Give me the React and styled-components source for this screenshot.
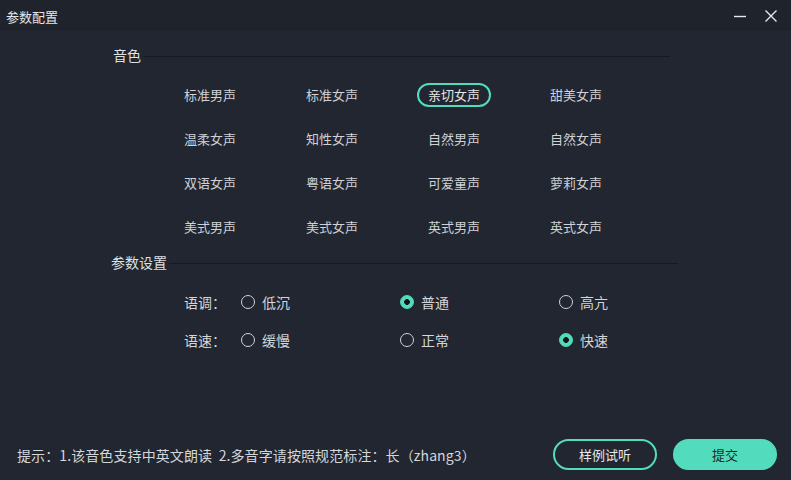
import React, { useState } from "react";
import styled, { createGlobalStyle } from "styled-components";

const GlobalStyle = createGlobalStyle`
  html, body {
    margin: 0;
    padding: 0;
    background: #212630;
  }
  * { box-sizing: border-box; }
`;

const FONT = `"Noto Sans CJK SC", "Noto Sans", sans-serif`;
const TEAL = "#52dcbd";

const voices = [
  "标准男声", "标准女声", "亲切女声", "甜美女声",
  "温柔女声", "知性女声", "自然男声", "自然女声",
  "双语女声", "粤语女声", "可爱童声", "萝莉女声",
  "美式男声", "美式女声", "英式男声", "英式女声",
];

const params = [
  { label: "语调：", options: ["低沉", "普通", "高亢"], initial: 1 },
  { label: "语速：", options: ["缓慢", "正常", "快速"], initial: 2 },
];

export default function App() {
  const [voice, setVoice] = useState(2);
  const [values, setValues] = useState(params.map((p) => p.initial));

  return (
    <>
      <GlobalStyle />
      <Window>
        <TitleBar>
          <Title>参数配置</Title>
          <WinButtons>
            <WinButton aria-label="minimize">
              <svg width="14" height="14" viewBox="0 0 14 14">
                <line x1="1" y1="7.5" x2="13" y2="7.5" stroke="#e6e8eb" strokeWidth="1.4" />
              </svg>
            </WinButton>
            <WinButton aria-label="close">
              <svg width="14" height="14" viewBox="0 0 14 14">
                <path d="M1.5 1.5 L12.5 12.5 M12.5 1.5 L1.5 12.5" stroke="#e6e8eb" strokeWidth="1.4" />
              </svg>
            </WinButton>
          </WinButtons>
        </TitleBar>

        <Body>
          <SectionHeader $indent={113} $end={121}>
            <SectionLabel>音色</SectionLabel>
            <Rule />
          </SectionHeader>

          <VoiceGrid>
            {voices.map((v, i) => (
              <VoiceItem key={v + i} $active={voice === i} onClick={() => setVoice(i)}>
                {v}
              </VoiceItem>
            ))}
          </VoiceGrid>

          <SectionHeader $indent={111} $end={113}>
            <SectionLabel>参数设置</SectionLabel>
            <Rule />
          </SectionHeader>

          <ParamList>
            {params.map((p, row) => (
              <ParamRow key={p.label}>
                <ParamLabel>{p.label}</ParamLabel>
                {p.options.map((o, col) => (
                  <RadioOption
                    key={o}
                    onClick={() =>
                      setValues((vs) => vs.map((x, k) => (k === row ? col : x)))
                    }
                  >
                    <RadioDot $checked={values[row] === col} />
                    {o}
                  </RadioOption>
                ))}
              </ParamRow>
            ))}
          </ParamList>

          <Footer>
            <Hint>提示：1.该音色支持中英文朗读&nbsp;&nbsp;2.多音字请按照规范标注：长（zhang3）</Hint>
            <Buttons>
              <PillButton>样例试听</PillButton>
              <PillButton $primary>提交</PillButton>
            </Buttons>
          </Footer>
        </Body>
      </Window>
    </>
  );
}

const Window = styled.div`
  width: 791px;
  height: 480px;
  display: flex;
  flex-direction: column;
  background: #212630;
  color: #d3d6db;
  font-family: ${FONT};
  overflow: hidden;
`;

const TitleBar = styled.div`
  height: 30px;
  flex: none;
  display: flex;
  align-items: center;
  justify-content: space-between;
  padding: 3px 13px 0 6px;
  background: #1f232b;
  border-bottom: 1px solid #1c2027;
`;

const Title = styled.div`
  font-size: 13px;
  color: #e4e6e9;
`;

const WinButtons = styled.div`
  display: flex;
  gap: 17px;
  align-items: center;
`;

const WinButton = styled.button`
  width: 14px;
  height: 14px;
  padding: 0;
  border: 0;
  background: transparent;
  display: flex;
  cursor: pointer;
`;

const Body = styled.div`
  flex: 1;
  display: flex;
  flex-direction: column;
  padding-top: 15px;
`;

const SectionHeader = styled.div`
  height: 20px;
  display: flex;
  align-items: center;
  padding-left: ${(p) => p.$indent}px;
  padding-right: ${(p) => p.$end}px;
  & + & {
    margin-top: 4px;
  }
`;

const SectionLabel = styled.div`
  font-size: 14px;
  color: #dde0e4;
  flex: none;
`;

const Rule = styled.div`
  flex: 1;
  height: 1px;
  margin-left: 2px;
  margin-top: 2px;
  background: #161a20;
`;

const VoiceGrid = styled.div`
  display: grid;
  grid-template-columns: repeat(4, 122px);
  grid-auto-rows: 44px;
  padding-left: 173px;
  margin-top: 8px;
  margin-bottom: 3px;
`;

const VoiceItem = styled.div`
  align-self: center;
  justify-self: start;
  height: 24px;
  line-height: 20px;
  padding: 0 9px;
  font-size: 13px;
  border-radius: 12px;
  border: 2px solid ${(p) => (p.$active ? TEAL : "transparent")};
  color: ${(p) => (p.$active ? "#e3e6e9" : "#cfd2d7")};
  cursor: pointer;
`;

const ParamList = styled.div`
  margin-top: 11px;
  padding-left: 184px;
  display: flex;
  flex-direction: column;
`;

const ParamRow = styled.div`
  height: 38px;
  display: grid;
  grid-template-columns: 57px repeat(3, 159px);
  align-items: center;
`;

const ParamLabel = styled.div`
  font-size: 14px;
  color: #d3d6db;
`;

const RadioOption = styled.label`
  display: flex;
  align-items: center;
  gap: 7px;
  font-size: 14px;
  color: #d3d6db;
  cursor: pointer;
`;

const RadioDot = styled.span`
  width: 14px;
  height: 14px;
  border-radius: 50%;
  flex: none;
  border: 1.5px solid ${(p) => (p.$checked ? TEAL : "#cfd2d7")};
  background: ${(p) =>
    p.$checked
      ? `radial-gradient(circle, #111418 0 2.6px, ${TEAL} 3.1px)`
      : "transparent"};
`;

const Footer = styled.div`
  margin-top: auto;
  display: flex;
  align-items: center;
  justify-content: space-between;
  padding: 0 14px 10px 17px;
`;

const Hint = styled.div`
  font-size: 14px;
  color: #d3d6db;
  letter-spacing: 0.1px;
`;

const Buttons = styled.div`
  display: flex;
  gap: 16px;
`;

const PillButton = styled.button`
  width: 104px;
  height: 31px;
  border-radius: 16px;
  font-family: ${FONT};
  font-size: 13px;
  cursor: pointer;
  border: 2px solid ${TEAL};
  background: ${(p) => (p.$primary ? TEAL : "transparent")};
  color: ${(p) => (p.$primary ? "#1d2a2b" : "#e6e8eb")};
`;
